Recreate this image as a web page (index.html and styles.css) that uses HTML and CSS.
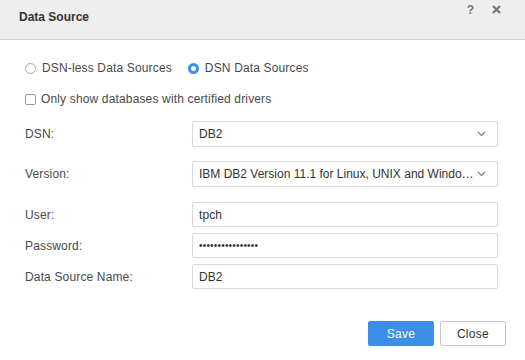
FILE: index.html
```html
<!DOCTYPE html>
<html>
<head>
<meta charset="utf-8">
<link rel="stylesheet" href="styles.css">
</head>
<body>
<div class="dialog">
  <div class="header">
    <div class="title">Data Source</div>
    <div class="tools">
      <span class="help">?</span>
      <svg class="close-x" width="9" height="9" viewBox="0 0 9 9"><path d="M1 1L8 8M8 1L1 8" stroke="#777" stroke-width="2.2" stroke-linecap="butt"/></svg>
    </div>
  </div>
  <div class="content">
    <div class="radios">
      <label class="radio"><span class="rbox"></span>DSN-less Data Sources</label>
      <label class="radio"><span class="rbox checked"></span>DSN Data Sources</label>
    </div>
    <label class="check"><span class="cbox"></span>Only show databases with certified drivers</label>
    <div class="form">
      <div class="row r-dsn">
        <div class="lbl">DSN:</div>
        <div class="field select"><span class="val">DB2</span><svg class="chev" width="9" height="6" viewBox="0 0 9 6"><path d="M1 1L4.5 4.5L8 1" fill="none" stroke="#777" stroke-width="1.1"/></svg></div>
      </div>
      <div class="row r-ver">
        <div class="lbl">Version:</div>
        <div class="field select"><span class="val">IBM DB2 Version 11.1 for Linux, UNIX and Windows</span><svg class="chev" width="9" height="6" viewBox="0 0 9 6"><path d="M1 1L4.5 4.5L8 1" fill="none" stroke="#777" stroke-width="1.1"/></svg></div>
      </div>
      <div class="row r-user">
        <div class="lbl">User:</div>
        <div class="field input"><span class="val">tpch</span></div>
      </div>
      <div class="row r-pass">
        <div class="lbl">Password:</div>
        <div class="field input"><span class="val dots">••••••••••••••••</span></div>
      </div>
      <div class="row r-name">
        <div class="lbl">Data Source Name:</div>
        <div class="field input"><span class="val">DB2</span></div>
      </div>
    </div>
    <div class="buttons">
      <button class="btn primary">Save</button>
      <button class="btn">Close</button>
    </div>
  </div>
</div>
</body>
</html>
```
FILE: styles.css
```css
* { box-sizing: border-box; }
html, body { margin: 0; padding: 0; background: #fff; }
body {
  font-family: "Liberation Sans", Arial, sans-serif;
  font-size: 12px;
  color: #444;
  width: 525px;
  height: 360px;
  overflow: hidden;
}
.dialog { width: 525px; height: 360px; }
.header {
  height: 40px;
  background: #eeeeee;
  border-bottom: 1px solid #d4d4d4;
  display: flex;
  justify-content: space-between;
  align-items: flex-start;
}
.title {
  font-weight: bold;
  font-size: 12px;
  color: #333;
  padding: 10px 0 0 19px;
  line-height: 14px;
}
.tools {
  display: flex;
  align-items: center;
  gap: 18px;
  padding: 5px 24px 0 0;
  height: 14px;
}
.help {
  font-weight: bold;
  font-size: 12px;
  color: #777;
  line-height: 14px;
}
.close-x { display: block; }
.content { padding: 0 27px 0 25px; }
.radios {
  display: flex;
  gap: 16px;
  margin-top: 20px;
  height: 16px;
  align-items: center;
}
.radio, .check {
  display: flex;
  align-items: center;
  letter-spacing: 0.15px;
  line-height: 16px;
  color: #4a4a4a;
}
.rbox {
  width: 11px;
  height: 11px;
  border: 1px solid #aaa;
  border-radius: 50%;
  margin-right: 6px;
  background: #fff;
}
.rbox.checked {
  border: 3px solid #3c8ee8;
  background: #fff;
}
.check { margin-top: 15px; }
.cbox {
  width: 11px;
  height: 11px;
  border: 1px solid #999;
  border-radius: 2px;
  margin-right: 5px;
}
.form { margin-top: 14px; }
.row {
  display: grid;
  grid-template-columns: 167px minmax(0, 1fr);
  align-items: center;
}
.lbl { letter-spacing: 0.15px; color: #4a4a4a; }
.field {
  border: 1px solid #d9d9d9;
  border-radius: 2px;
  display: flex;
  align-items: center;
  padding: 0 11px 0 6px;
  color: #333;
  background: #fff;
  min-width: 0;
}
.select { height: 26px; }
.input { height: 25px; }
.r-ver { margin-top: 14px; }
.r-user { margin-top: 15px; }
.r-pass, .r-name { margin-top: 6px; }
.val {
  flex: 1;
  min-width: 0;
  white-space: nowrap;
  overflow: hidden;
  text-overflow: ellipsis;
  letter-spacing: 0.1px;
}
.select .val { padding-right: 2px; letter-spacing: 0; }
.dots { font-size: 10px; letter-spacing: 0.2px; }
.chev { flex: none; }
.buttons {
  display: flex;
  justify-content: flex-end;
  gap: 6px;
  margin-top: 32px;
  margin-right: -8px;
}
.btn {
  width: 66px;
  height: 25px;
  font-family: "Liberation Sans", Arial, sans-serif;
  font-size: 12px;
  letter-spacing: 0.3px;
  border: 1px solid #c8c8c8;
  border-radius: 2px;
  background: #fff;
  color: #333;
  padding: 0;
}
.btn.primary {
  background: #3c8ee8;
  border-color: #3c8ee8;
  color: #fff;
}
```
